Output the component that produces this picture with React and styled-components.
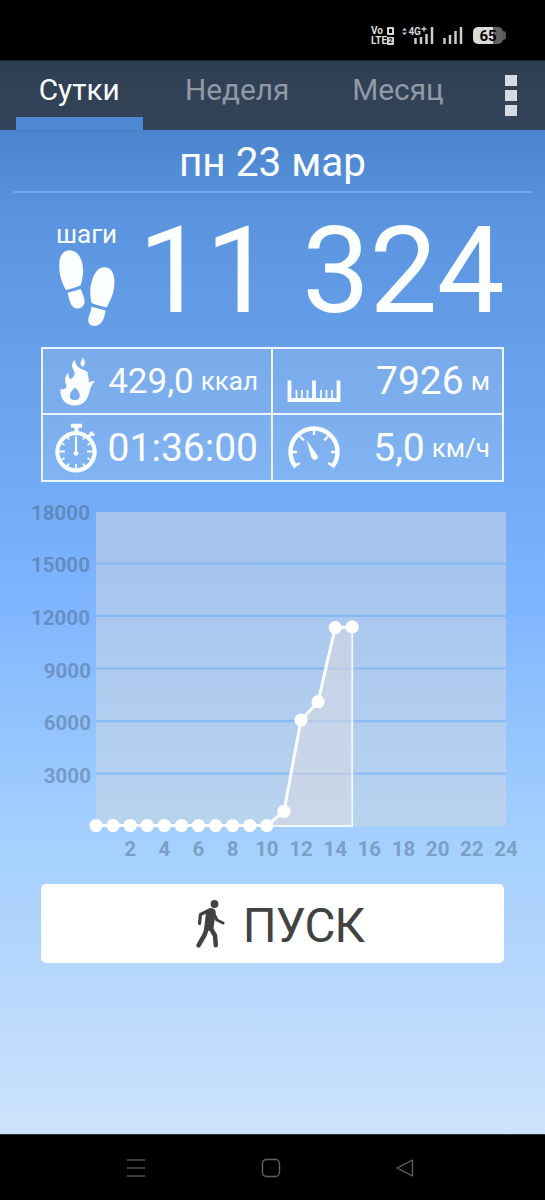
import React from 'react';
import styled, { createGlobalStyle } from 'styled-components';

const GlobalStyle = createGlobalStyle`
  * { box-sizing: border-box; }
  body { margin: 0; background: #000; font-family: Roboto, "Noto Sans", sans-serif; }
  svg { display: block; flex: none; }
`;

const Screen = styled.div`
  width: 545px;
  height: 1200px;
  display: flex;
  flex-direction: column;
  background: #000;
  overflow: hidden;
`;

const StatusBar = styled.header`
  height: 60px;
  flex: none;
  display: flex;
  justify-content: flex-end;
  align-items: flex-start;
  padding: 25px 39px 0 0;
  color: #dcdcdc;
`;

const Volte = styled.div`
  width: 25px;
  margin-right: 6px;
  padding-top: 1px;
  font-size: 10px;
  line-height: 10px;
  font-weight: 700;
  white-space: nowrap;
`;

const VolteLine = styled.div`
  display: flex;
  align-items: center;
  gap: ${(p) => p.$gap}px;
`;

const SimMark = styled.span`
  width: 7px;
  height: 8px;
  border: ${(p) => (p.$filled ? 0 : 2)}px solid #d4d4d4;
  background: ${(p) => (p.$filled ? '#d4d4d4' : 'transparent')};
  border-radius: 1px;
  color: #000;
  font-size: 7px;
  line-height: 8px;
  text-align: center;
`;

const SignalGroup = styled.div`
  display: flex;
  gap: 7px;
`;

const Battery = styled.div`
  display: flex;
  align-items: center;
  margin-left: 10px;
  padding-top: 2px;
`;

const BatteryBody = styled.div`
  width: 30px;
  height: 17px;
  border-radius: 5px;
  background: linear-gradient(90deg, #dadada 68%, #626262 68%);
  color: #000;
  font-size: 15px;
  line-height: 18px;
  font-weight: 700;
  text-align: center;
`;

const BatteryTip = styled.div`
  width: 3px;
  height: 9px;
  border-radius: 0 4px 4px 0;
  background: #585858;
`;

const Tabs = styled.nav`
  height: 70px;
  flex: none;
  display: flex;
  padding-left: 16px;
  background: linear-gradient(#2d3c4e, #304155 25%, #33445a);
  border-top: 1px solid #1d2733;
`;

const Tab = styled.div`
  width: ${(p) => p.$width}px;
  padding-top: 9px;
  text-align: center;
  font-size: 29.8px;
  line-height: 40px;
  color: ${(p) => (p.$active ? '#fbfcfd' : '#9199a6')};
  border-bottom: 13px solid ${(p) => (p.$active ? '#4e88d2' : 'transparent')};
`;

const MenuButton = styled.div`
  width: 12px;
  margin-left: 41px;
  padding-top: 14px;
  display: flex;
  flex-direction: column;
  gap: 4px;
`;

const MenuDot = styled.span`
  height: 11px;
  background: #d6dae2;
`;

const Main = styled.main`
  height: 1004px;
  flex: none;
  display: flex;
  flex-direction: column;
  color: #fbfeff;
  background: linear-gradient(
    #4b84cc 0, #528cd6 40px, #5a93de 85px, #649de8 200px, #6ca5f0 300px,
    #76aff9 400px, #7fb5ff 475px, #8fc1fe 570px, #a6d1ff 720px,
    #b4d6fc 830px, #cce3fc 1000px
  );
`;

const DateTitle = styled.h1`
  margin: 0 13px;
  height: 63px;
  padding-top: 6px;
  text-align: center;
  font-size: 40.5px;
  line-height: 52px;
  font-weight: 400;
  border-bottom: 2px solid #74a9ea;
`;

const Steps = styled.section`
  height: 154px;
  flex: none;
  display: flex;
  justify-content: space-between;
  padding: 0 41px 0 56px;
`;

const StepsLabel = styled.div`
  width: 62px;
  padding-top: 26px;
  font-size: 26px;
  line-height: 30px;

  svg { margin-top: 1px; }
`;

const StepCount = styled.div`
  padding-top: 7px;
  font-size: 121px;
  line-height: 142px;
  letter-spacing: -0.7px;
  white-space: nowrap;
`;

const Metrics = styled.section`
  width: 463px;
  height: 135px;
  flex: none;
  margin-left: 41px;
  display: grid;
  grid-template-columns: 228px 229px;
  grid-template-rows: 64px 65px;
  gap: 2px;
  border: 2px solid #ecf5ff;
  background:
    linear-gradient(#ecf5ff, #ecf5ff) 228px 0 / 2px 100% no-repeat,
    linear-gradient(#ecf5ff, #ecf5ff) 0 64px / 100% 2px no-repeat,
    rgba(200, 218, 240, 0.2);
`;

const Metric = styled.div`
  display: flex;
  align-items: center;
  justify-content: space-between;
  padding: 0 ${(p) => p.$right}px 0 ${(p) => p.$left}px;
`;

const Reading = styled.div`
  display: flex;
  align-items: baseline;
  gap: 7px;
  padding-top: ${(p) => (p.$size ? 2 : 0)}px;
  font-size: ${(p) => p.$size || 39}px;
  line-height: 46px;
  white-space: nowrap;
`;

const Unit = styled.span`
  font-size: 26px;
  line-height: 26px;
  transform: translateY(-${(p) => p.$lift || 4}px);
`;

const Chart = styled.svg`
  margin-top: 18px;
  font-size: 20.6px;
  font-weight: 700;
`;

const StartButton = styled.button`
  width: 463px;
  height: 79px;
  flex: none;
  margin: 13px 0 0 41px;
  padding: 4px 0 0 14px;
  border: 0;
  border-radius: 5px;
  background: #fff;
  color: #424242;
  display: flex;
  align-items: center;
  justify-content: center;
  gap: 18px;
  font-family: inherit;
  font-size: 47.5px;
  line-height: 60px;
  letter-spacing: -0.8px;

  svg { margin-bottom: 3px; }
`;

const NavBar = styled.footer`
  flex: 1;
  display: flex;
  justify-content: space-between;
  align-items: center;
  padding: 0 130px 0 126px;
  border-top: 1px solid #303943;
`;

const Signal = ({ network }) => (
  <svg width={network ? 33 : 21} height="22" viewBox={network ? '0 0 33 22' : '0 0 21 22'}>
    {network && (
      <>
        <path d="M0 5.5 2.5 3 5 5.5zM0 7.5h5L2.5 10z" fill="#ccc" />
        <text x="6.5" y="9.5" fontSize="10" fontWeight="700" fill="#d4d4d4" letterSpacing="-.3">4G</text>
        <path d="M19.500 4h5M22 1.500v5" stroke="#ccc" strokeWidth="1.300" />
      </>
    )}
    <g transform={network ? 'translate(12 0)' : 'translate(1 0)'} stroke="#ccc" strokeWidth="2.500">
      <path d={network ? 'M1.500 19v-6M7 19v-7M12.500 19V9M18 19V2' : 'M1.500 19v-6M7 19v-9M12.500 19V6M18 19V2'} />
    </g>
  </svg>
);

const Footprints = () => (
  <svg width="60" height="80" viewBox="0 0 60 80" fill="#fbfeff">
    <path d="M10 40.200C5 31 3 23 3.200 14C3.400 6 7 .500 13 .200C21 0 26 7 27 18C27.600 25 25.800 31 24.600 35.600C20 37.200 15.400 38.800 10 40.200Z" />
    <path d="M11.600 42.700L24.800 39C26.400 44 29.400 49 28.400 53C27.600 56.400 25 58.500 21.500 58.500C14.500 58.400 13.400 50 11.600 42.700Z" />
    <path d="M35.600 53C33.500 44 34 36 36.500 29C39 21.500 43 17.400 48.500 17.300C55.500 17.300 58.800 24 58.500 33C58.200 42 55 50 50.600 57.400C45.600 56.500 40.500 55 35.600 53Z" />
    <path d="M35.400 56.800L49.600 60.600C48.500 68 46 76 38.800 76C34.500 75.800 32.100 73.500 32.300 69.500C32.500 66 35.200 62 35.400 56.800Z" />
  </svg>
);

const Flame = () => (
  <svg width="48" height="50" viewBox="0 0 48 50">
    <path
      fill="#fbfeff"
      fillRule="evenodd"
      d="M21 4C17 7 17.500 11 20 15C22 19 19 22 16.500 23C15 22.500 14.500 20 14.200 16.500C10.500 21 10.500 25 12 28C13.500 31 11.500 34.500 6.500 33C5.500 43 12 49.500 20.500 49.500C31 49.500 34 42 36 34C37 29.500 39 27.500 41 25C38 25 36.500 25 34.800 26.500C35.300 22 33.500 19.500 33.500 16C30 12.500 22 14 21 4ZM21 31.500C24.500 34.500 26.500 37.500 25.500 41.500C24.500 45 17 45 16 41.500C15 37.500 17.500 35 21 31.500Z"
    />
    <path fill="#fbfeff" d="M28.500 1C29 5.500 23.500 7 28.500 11C31.500 9 31.800 5.500 28.500 1Z" />
  </svg>
);

const Stopwatch = () => (
  <svg width="44" height="50" viewBox="0 0 44 50" fill="none" stroke="#fbfeff">
    <circle cx="22" cy="28.800" r="18.600" strokeWidth="4.200" />
    <path d="M17 2.700h11M22.500 3v7" strokeWidth="4" />
    <path d="M34 14l3.500-3.500M36.500 9l3.500 3.500" strokeWidth="3" />
    <path d="M22 13.500v16" strokeWidth="2" />
    <path
      strokeWidth="1.800"
      d="M22 41v4M6 28.500h5M33 28.500h5M13.500 14l1.500 2.500M30.500 14L29 16.500M8 20.500l2.500 1.500M36 20.500L33.500 22M8 36.500l2.500-1.500M36 36.500L33.500 35M13.500 43l1.500-2.500M30.500 43L29 40.500"
    />
    <circle cx="22" cy="30.300" r="2.400" fill="#fbfeff" stroke="none" />
  </svg>
);

const Ruler = () => (
  <svg width="54" height="50" viewBox="0 0 54 50" fill="none" stroke="#fbfeff">
    <path d="M2.500 24.500v19.500h49V24.500M27 24.500v19" strokeWidth="3.800" />
    <path d="M9.500 34v8M15 34v8M20.500 34v8M34 34v8M39.500 34v8M45 34v8" strokeWidth="1.700" />
  </svg>
);

const Gauge = () => (
  <svg width="54" height="50" viewBox="0 0 54 50" fill="none" stroke="#fbfeff">
    <path d="M9 44A23.500 23.500 0 1 1 45 44" strokeWidth="4.500" />
    <path d="M27 6v6M13 13.500l4 4M41 13.500l-4 4M4.500 29H10M44 29h5.500M8 42.500l5-2.500M46 42.500l-5-2.500" strokeWidth="2.300" />
    <path d="M19.500 17L30.500 32.500C32 36 27 39 24.500 34.500Z" fill="#fbfeff" stroke="none" />
  </svg>
);

const Walker = () => (
  <svg width="30" height="50" viewBox="0 0 30 50" fill="none" stroke="#424242" strokeLinecap="round" strokeLinejoin="round">
    <circle cx="19.500" cy="5" r="3.900" fill="#424242" stroke="none" />
    <path d="M15 10.800L5.500 15.500L4.500 24.500" strokeWidth="3.200" />
    <path d="M19 15L22 21L28 24" strokeWidth="3" />
    <path d="M14.500 9.500C19 8.300 21.500 11 20.500 15L18.500 29L17 32L9 31L11 13Z" fill="#424242" stroke="none" />
    <path d="M12 29L9.500 36L3.500 46.300M15.500 29L20 36.500L20.800 46.300" strokeWidth="4.500" />
  </svg>
);

const HOURLY = [0, 0, 0, 0, 0, 0, 0, 0, 0, 0, 0, 800, 6010, 7060, 11290, 11324];
const PLOT = { left: 96, right: 506, top: 12, bottom: 326 };
const px = (hour) => PLOT.left + (hour * (PLOT.right - PLOT.left)) / 24;
const py = (steps) => PLOT.bottom - (steps * 52.600) / 3000;

const StepsChart = () => {
  const points = HOURLY.map((v, i) => [px(i), py(v) - 0.500]);
  const line = points.map((p) => p.join(',')).join(' ');
  const last = points[points.length - 1];
  return (
    <Chart width="545" height="371" viewBox="0 0 545 371">
      <rect x={PLOT.left} y={PLOT.top} width="410" height="314" fill="rgba(205,215,225,.53)" />
      {[3000, 6000, 9000, 12000, 15000].map((v) => (
        <path key={v} d={`M96 ${py(v) + 0.300}H506`} stroke="#7cb4f6" strokeOpacity=".75" strokeWidth="2.200" />
      ))}
      <g fill="rgba(65,88,115,.43)" textAnchor="end">
        {[3000, 6000, 9000, 12000, 15000, 18000].map((v) => (
          <text key={v} x={v < 10000 ? 91 : 90} y={py(v) + 9.300}>{v}</text>
        ))}
      </g>
      <polygon points={`${line} ${last[0]},${PLOT.bottom}`} fill="rgba(222,218,225,.5)" />
      <path d={`M${px(10)} ${PLOT.bottom}H${last[0]}V${last[1]}`} fill="none" stroke="#f2f7fb" strokeWidth="1.800" />
      <polyline points={line} fill="none" stroke="#fbfeff" strokeWidth="3" />
      {points.map(([x, y]) => <circle key={x} cx={x} cy={y} r="6.600" fill="#fff" />)}
      <g fill="rgba(65,88,115,.43)" textAnchor="middle">
        {Array.from({ length: 12 }, (_, i) => (i + 1) * 2).map((h) => (
          <text key={h} x={px(h)} y="356.300">{h}</text>
        ))}
      </g>
    </Chart>
  );
};

export default function App() {
  return (
    <Screen>
      <GlobalStyle />
      <StatusBar>
        <Volte>
          <VolteLine $gap={4}>Vo<SimMark /></VolteLine>
          <VolteLine $gap={0}>LTE<SimMark $filled>2</SimMark></VolteLine>
        </Volte>
        <SignalGroup>
          <Signal network />
          <Signal />
        </SignalGroup>
        <Battery>
          <BatteryBody>65</BatteryBody>
          <BatteryTip />
        </Battery>
      </StatusBar>
      <Tabs>
        <Tab $active $width={126.5}>Сутки</Tab>
        <Tab $width={189.5}>Неделя</Tab>
        <Tab $width={132}>Месяц</Tab>
        <MenuButton><MenuDot /><MenuDot /><MenuDot /></MenuButton>
      </Tabs>
      <Main>
        <DateTitle>пн 23 мар</DateTitle>
        <Steps>
          <StepsLabel>
            шаги
            <Footprints />
          </StepsLabel>
          <StepCount>11 324</StepCount>
        </Steps>
        <Metrics>
          <Metric $left={11} $right={13}>
            <Flame />
            <Reading $size={35}>429,0<Unit $lift={3}>ккал</Unit></Reading>
          </Metric>
          <Metric $left={14} $right={12}>
            <Ruler />
            <Reading>7926<Unit>м</Unit></Reading>
          </Metric>
          <Metric $left={11} $right={13}>
            <Stopwatch />
            <Reading>01:36:00</Reading>
          </Metric>
          <Metric $left={14} $right={12}>
            <Gauge />
            <Reading>5,0<Unit>км/ч</Unit></Reading>
          </Metric>
        </Metrics>
        <StepsChart />
        <StartButton>
          <Walker />
          ПУСК
        </StartButton>
      </Main>
      <NavBar>
        <svg width="20" height="20" viewBox="0 0 20 20" stroke="#505050" strokeWidth="1.600">
          <path d="M1 2h18M1 10h18M1 18h18" />
        </svg>
        <svg width="20" height="20" viewBox="0 0 20 20" fill="none" stroke="#606060" strokeWidth="1.400">
          <rect x="1.500" y="1.500" width="17" height="17" rx="4" />
        </svg>
        <svg width="20" height="20" viewBox="0 0 20 20" fill="none" stroke="#606060" strokeWidth="1.400" strokeLinejoin="round">
          <path d="M2 10L17.500 2V18Z" />
        </svg>
      </NavBar>
    </Screen>
  );
}
